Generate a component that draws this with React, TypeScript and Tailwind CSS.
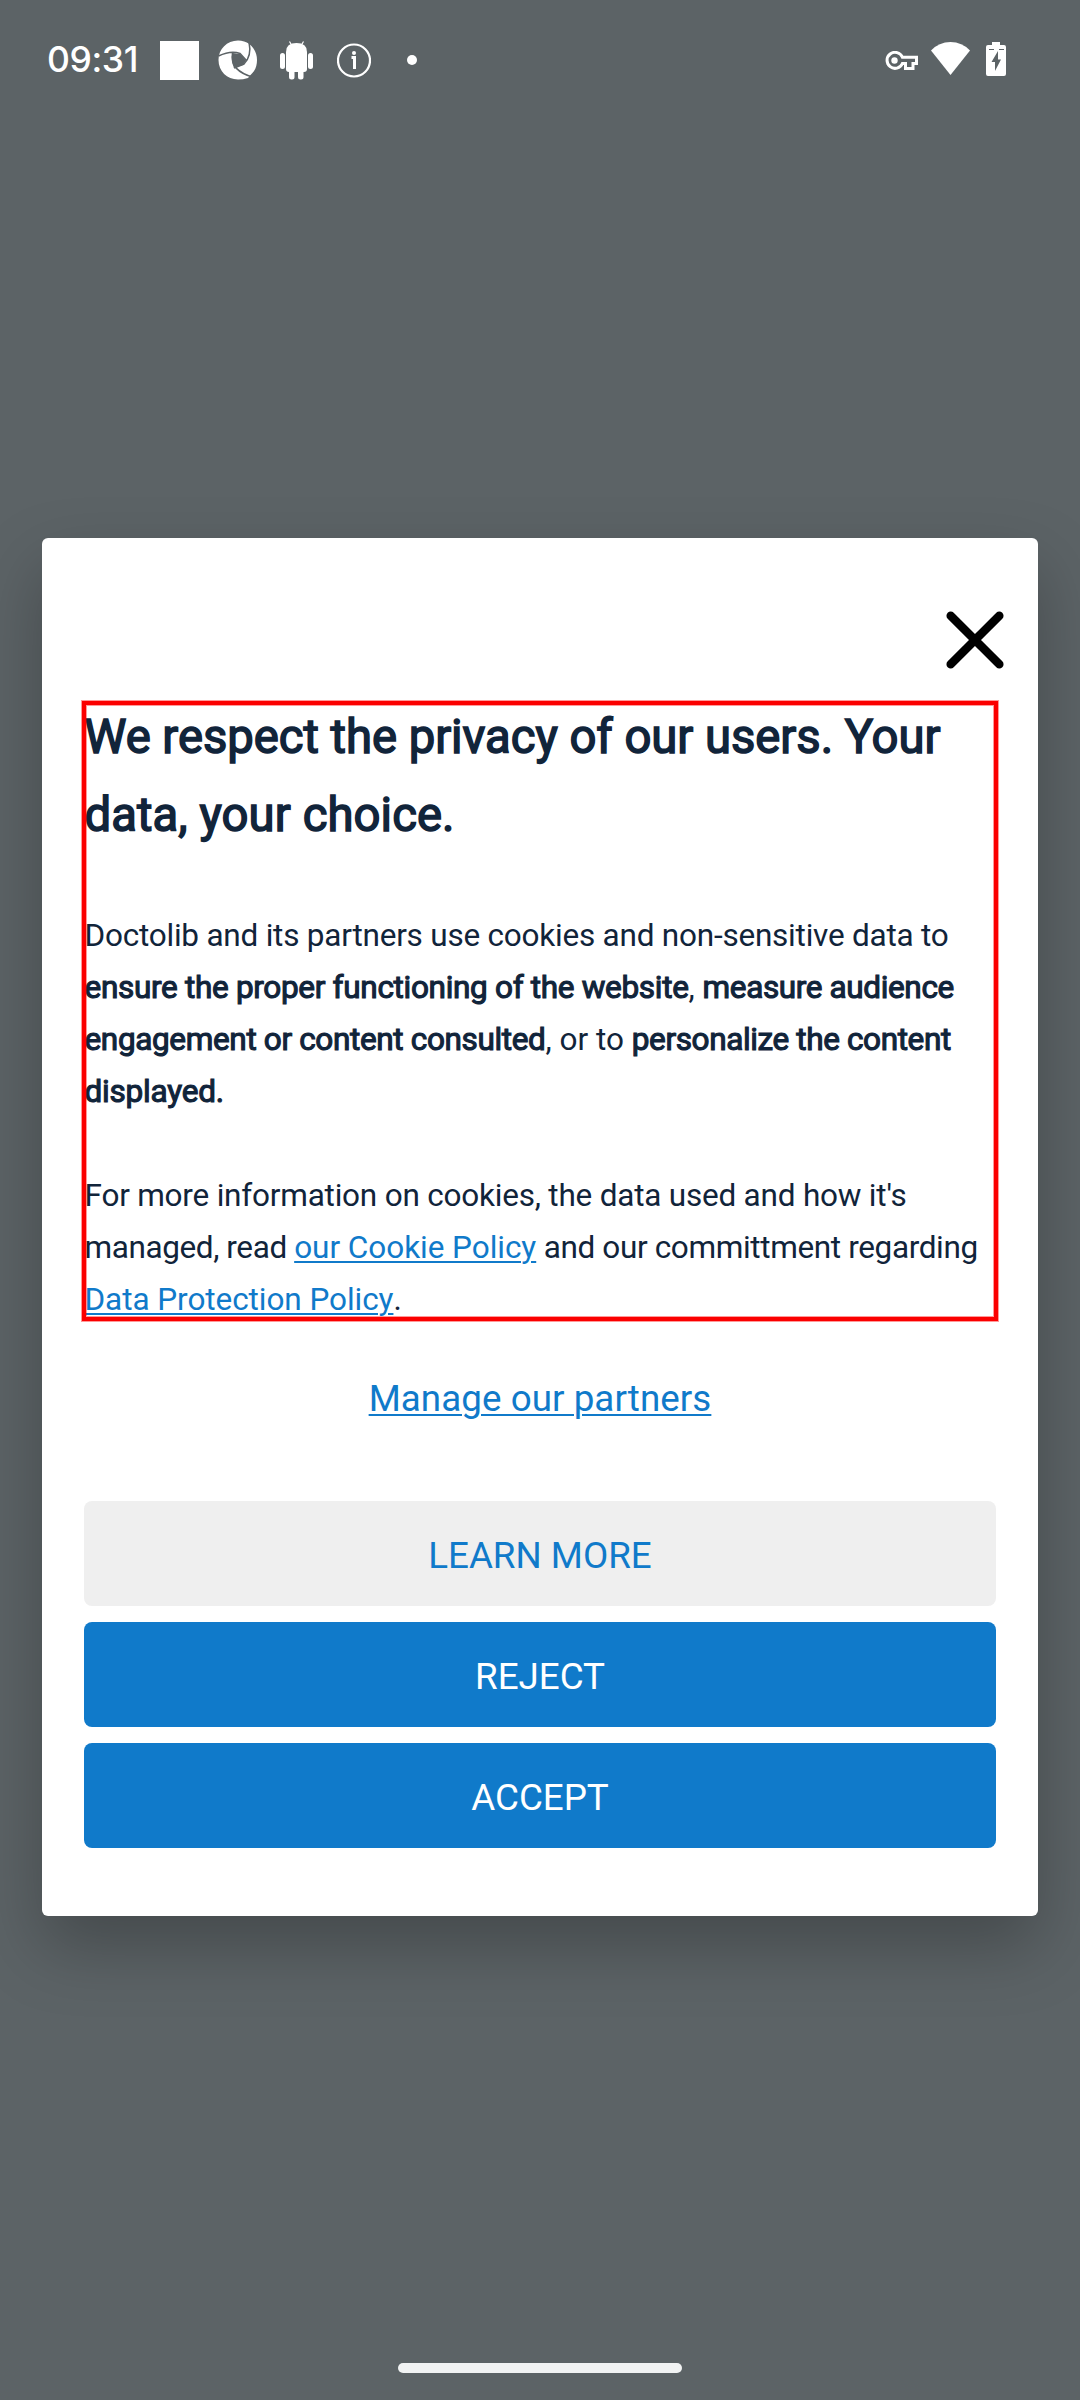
import React from "react";

function StatusBar() {
  return (
    <header className="flex h-[120px] w-full items-center pl-[47px] pr-[74px] text-white">
      <span className="w-[113px] whitespace-nowrap font-['Inter'] text-[35.5px] font-medium leading-[40px] tracking-[-0.4px]">
        09:31
      </span>
      <div className="size-[39px] bg-white" />
      <svg className="ml-[19px]" width="40" height="40" viewBox="0 0 40 40" fill="none">
        <path d="M20 .5C31 .5 39 9 39 20C39 26 37 31 33 34.500L30 38Q25 39.500 20 39.500C9 39.500 .5 31 .5 20C.5 9 9 .5 20 .5Z" fill="#fff" />
        <path d="M14.500 13L22 14L28 20.500L25 25L16 28Q12.500 20 14.500 13Z" fill="#5c6366" />
        <path
          d="M.5 16Q13 10 22 13.500L28.500 20.500M31 2Q34 16 26 24L16 28M14.500 13Q11.500 31 36 37.500"
          stroke="#5c6366"
          strokeWidth="1.5"
        />
      </svg>
      <svg className="ml-[22px]" width="33" height="40" viewBox="0 0 33 40" fill="#fff">
        <path d="M6 12Q6 3 16.500 3Q27 3 27 12V29Q27 32 24 32H9Q6 32 6 29Z" />
        <rect x="0" y="13" width="5" height="16" rx="2.5" />
        <rect x="28" y="13" width="5" height="16" rx="2.5" />
        <rect x="9" y="26" width="5.500" height="13.500" rx="2.5" />
        <rect x="18" y="26" width="5.500" height="13.500" rx="2.5" />
        <path d="M9.500 1.500L11.500 5M23.500 1.500L21.500 5" stroke="#fff" strokeWidth="1.200" />
      </svg>
      <svg className="ml-[24px]" width="34" height="36" viewBox="0 0 34 36" fill="none">
        <circle cx="17" cy="18.500" r="16" stroke="#fff" strokeWidth="2.200" />
        <path d="M14.500 15.500H17.500V27" stroke="#fff" strokeWidth="3" />
        <circle cx="17" cy="11" r="2" fill="#fff" />
      </svg>
      <div className="ml-[36px] size-[10px] rounded-full bg-white" />
      <div className="ml-auto flex items-center">
        <svg width="33" height="19" viewBox="0 0 33 19" fill="none">
          <path
            d="M17.400 6.200H31.500V12.500H28V17.500H20.500V12.500H17.400A8 8 0 1 1 17.400 6.200Z"
            stroke="#fff"
            strokeWidth="3"
          />
          <circle cx="9.500" cy="9.500" r="3.200" fill="#fff" />
        </svg>
        <svg className="-mt-[3px] ml-[13px]" width="39" height="33" viewBox="0 0 39 33" fill="#fff">
          <path d="M0 8.500Q8 0 19.500 0Q31 0 39 8.500L19.500 33Z" />
        </svg>
        <svg className="-mt-[2px] ml-[16px]" width="20" height="34" viewBox="0 0 20 34">
          <path d="M6 0H14V3H18Q20 3 20 5V32Q20 34 18 34H2Q0 34 0 32V5Q0 3 2 3H6Z" fill="#fff" />
          <path d="M12 9L5.500 20H9V29L15 17.500H12Z" fill="#5c6366" />
          <path d="M3 7.500H8M13 7.500H18" stroke="#5c6366" strokeWidth="1" />
        </svg>
      </div>
    </header>
  );
}

const link = "text-[#107aca] underline decoration-[2px] underline-offset-[3px]";
const strong = "font-normal [-webkit-text-stroke:1.1px_#11243a]";
const button = "flex h-[105px] w-full items-center justify-center rounded-[8px] pt-[4px] text-[36.75px] leading-[44px]";

function PrivacyText() {
  return (
    <section className="relative mt-[28px] h-[622px] w-[912px] pl-[0.5px] pt-px text-[#11243a]">
      <h1 className="whitespace-nowrap text-[47.25px] font-normal leading-[78px] [-webkit-text-stroke:1.5px_#11243a]">
        <span className="tracking-[-0.04px]">We respect the privacy of our users. Your</span>
        <br />
        <span className="tracking-[0.08px]">data, your choice.</span>
      </h1>
      <p className="mt-[56px] whitespace-nowrap text-[31.5px] leading-[52px]">
        <span className="tracking-[-0.22px]">Doctolib and its partners use cookies and non-sensitive data to</span>
        <br />
        <b className={strong + " tracking-[-0.31px]"}>ensure the proper functioning of the website</b>,{" "}
        <b className={strong + " tracking-[-0.37px]"}>measure audience</b>
        <br />
        <b className={strong + " tracking-[-0.35px]"}>engagement or content consulted</b>, or to{" "}
        <b className={strong + " tracking-[-0.38px]"}>personalize the content</b>
        <br />
        <b className={strong + " tracking-[-0.2px]"}>displayed.</b>
      </p>
      <p className="mt-[52px] whitespace-nowrap text-[31.5px] leading-[52px]">
        <span className="tracking-[-0.21px]">For more information on cookies, the data used and how it's</span>
        <br />
        <span className="tracking-[-0.4px]">managed, read </span>
        <a className={link + " tracking-[-0.04px]"}>our Cookie Policy</a>
        <span className="tracking-[-0.36px]"> and our committment regarding</span>
        <br />
        <a className={link + " tracking-[-0.06px]"}>Data Protection Policy</a>.
      </p>
      <div className="pointer-events-none absolute -left-[2px] top-[4px] h-[620px] w-[916px] border-4 border-[#fb0000] shadow-[0_0_0_1px_rgba(255,0,0,0.4),inset_0_0_0_1px_rgba(255,0,0,0.4)]" />
    </section>
  );
}

export default function App() {
  return (
    <div className="flex h-[2400px] w-[1080px] flex-col items-center overflow-hidden bg-[#5c6366] font-['Roboto',sans-serif]">
      <StatusBar />
      <main className="mt-[418px] flex h-[1378px] w-[996px] flex-col items-center rounded-[6px] bg-white px-[42px] shadow-[0_30px_68px_0_rgba(0,0,0,0.26)]">
        <button className="-mr-[8px] mt-[73px] self-end" aria-label="Close">
          <svg width="58" height="58" viewBox="0 0 58 58" stroke="#000" strokeWidth="8.500" strokeLinecap="round">
            <path d="M4.700 4.700L53.300 53.300M53.300 4.700L4.700 53.300" />
          </svg>
        </button>
        <PrivacyText />
        <a className={"mt-[58px] text-[36.75px] leading-[44px] tracking-[0.06px] " + link}>Manage our partners</a>
        <div className="mt-[80px] flex w-full flex-col gap-[16px]">
          <button className={button + " bg-[#efefef] text-[#107aca]"}>LEARN MORE</button>
          <button className={button + " bg-[#107aca] text-white"}>REJECT</button>
          <button className={button + " bg-[#107aca] text-white"}>ACCEPT</button>
        </div>
      </main>
      <div className="mb-[27px] mt-auto h-[10px] w-[284px] rounded-full bg-[#f1f3f3]" />
    </div>
  );
}
